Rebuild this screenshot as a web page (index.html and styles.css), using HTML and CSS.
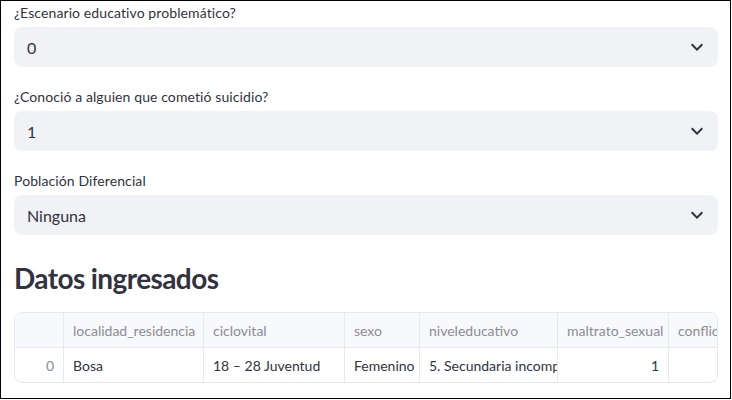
FILE: index.html
```html
<!DOCTYPE html>
<html lang="es">
<head>
<meta charset="utf-8">
<link rel="stylesheet" href="styles.css">
</head>
<body>
<div class="page">
  <div class="widgets">
    <div class="widget">
      <div class="label">¿Escenario educativo problemático?</div>
      <div class="select"><span class="value">0</span><svg class="chev" viewBox="0 0 24 24" width="24" height="24"><path d="M16.59 8.59L12 13.17 7.41 8.59 6 10l6 6 6-6z"/></svg></div>
    </div>
    <div class="widget">
      <div class="label">¿Conoció a alguien que cometió suicidio?</div>
      <div class="select"><span class="value">1</span><svg class="chev" viewBox="0 0 24 24" width="24" height="24"><path d="M16.59 8.59L12 13.17 7.41 8.59 6 10l6 6 6-6z"/></svg></div>
    </div>
    <div class="widget">
      <div class="label">Población Diferencial</div>
      <div class="select"><span class="value">Ninguna</span><svg class="chev" viewBox="0 0 24 24" width="24" height="24"><path d="M16.59 8.59L12 13.17 7.41 8.59 6 10l6 6 6-6z"/></svg></div>
    </div>
  </div>
  <h3 class="heading">Datos ingresados</h3>
  <div class="table">
    <div class="cell head idx"></div>
    <div class="cell head">localidad_residencia</div>
    <div class="cell head">ciclovital</div>
    <div class="cell head">sexo</div>
    <div class="cell head">niveleducativo</div>
    <div class="cell head">maltrato_sexual</div>
    <div class="cell head">conflicto_familiar</div>
    <div class="cell idx num">0</div>
    <div class="cell">Bosa</div>
    <div class="cell">18 – 28 Juventud</div>
    <div class="cell">Femenino</div>
    <div class="cell">5. Secundaria incompleta</div>
    <div class="cell num">1</div>
    <div class="cell"></div>
  </div>
</div>
</body>
</html>
```
FILE: styles.css
```css
html, body {
  margin: 0;
  padding: 0;
  background: #fff;
}
body {
  font-family: "Lato", "Noto Sans", sans-serif;
  color: #31333f;
}
.page {
  box-sizing: border-box;
  width: 731px;
  height: 399px;
  border: 1px solid #000;
  padding: 1px 12px 0 13px;
  overflow: hidden;
}
.widgets {
  display: flex;
  flex-direction: column;
  gap: 19px;
}
.widget {
  display: flex;
  flex-direction: column;
  gap: 4px;
}
.label {
  font-size: 14px;
  line-height: 21px;
  height: 21px;
  color: #31333f;
  letter-spacing: 0.1px;
}
.select {
  height: 40px;
  background: #f0f2f6;
  border-radius: 8px;
  display: flex;
  align-items: center;
  justify-content: space-between;
  padding: 0 9px 0 13px;
}
.value {
  font-size: 16px;
  color: #31333f;
}
.chev {
  fill: #31333f;
  display: block;
}
.heading {
  margin: 26px 0 17px;
  font-size: 28px;
  line-height: 34px;
  font-weight: 700;
  letter-spacing: -0.6px;
  color: #31333f;
}
.table {
  display: grid;
  grid-template-columns: 49px 140px 141px 75px 138px 111px 120px;
  grid-template-rows: 35px 35px;
  border: 1px solid #e6e9ef;
  border-radius: 8px;
  overflow: hidden;
  height: 71px;
  box-sizing: border-box;
}
.cell {
  box-sizing: border-box;
  border-right: 1px solid #e6e9ef;
  font-size: 14px;
  padding: 0 9px 0 9px;
  display: flex;
  align-items: center;
  white-space: nowrap;
  overflow: hidden;
}
.head {
  background: #f8f9fb;
  color: #8a8c96;
  border-bottom: 1px solid #e6e9ef;
}
.idx {
  color: #8a8c96;
}
.num {
  justify-content: flex-end;
}
```
